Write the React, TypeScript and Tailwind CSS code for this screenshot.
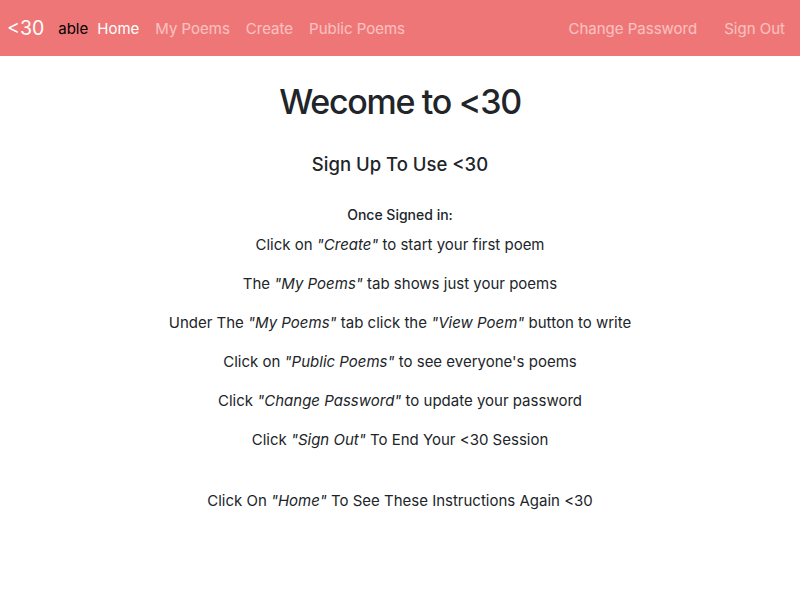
import React from "react";

const font = { fontFamily: "Inter, 'Noto Sans', sans-serif" };

function I({ children }: { children: React.ReactNode }) {
  return <em className="italic">"{children}"</em>;
}

export default function App() {
  const lines: React.ReactNode[] = [
    <>Click on <I>Create</I> to start your first poem</>,
    <>The <I>My Poems</I> tab shows just your poems</>,
    <>Under The <I>My Poems</I> tab click the <I>View Poem</I> button to write</>,
    <>Click on <I>Public Poems</I> to see everyone's poems</>,
    <>Click <I>Change Password</I> to update your password</>,
    <>Click <I>Sign Out</I> To End Your &lt;30 Session</>,
  ];
  return (
    <div className="w-[800px] h-[600px] bg-white text-[#212529] font-['Inter',sans-serif]" style={font}>
      <nav className="h-14 bg-[#ef7676] flex items-center pl-[7px] pr-[15px] pt-[2px]">
        <span className="text-[19.5px] text-white mr-[14px] leading-none">&lt;30</span>
        <span className="text-[15px] text-black">able</span>
        <div className="flex items-center text-[15px] ml-[1px]">
          <span className="px-2 text-white">Home</span>
          <span className="px-2 text-white/55">My Poems</span>
          <span className="px-2 text-white/55">Create</span>
          <span className="px-2 text-white/55">Public Poems</span>
        </div>
        <div className="ml-auto flex items-center gap-[11px] text-[15px]">
          <span className="px-2 text-white/55">Change Password</span>
          <span className="pl-2 text-white/55">Sign Out</span>
        </div>
      </nav>
      <main className="flex flex-col items-center text-center">
        <h1 className="mt-[22px] text-[34px] leading-[48px] font-medium tracking-[-1.3px]">Wecome to &lt;30</h1>
        <h4 className="mt-[24px] text-[18.5px] leading-[28px] font-medium">Sign Up To Use &lt;30</h4>
        <h6 className="mt-[27px] text-[14px] leading-[20px] font-medium">Once Signed in:</h6>
        <div className="mt-[10px] flex flex-col text-[15px]">
          {lines.map((l, i) => (
            <p key={i} className="h-[39px] leading-[20px]">{l}</p>
          ))}
        </div>
        <p className="mt-[22px] text-[15px] leading-[20px]">
          Click On <I>Home</I> To See These Instructions Again &lt;30
        </p>
      </main>
    </div>
  );
}
